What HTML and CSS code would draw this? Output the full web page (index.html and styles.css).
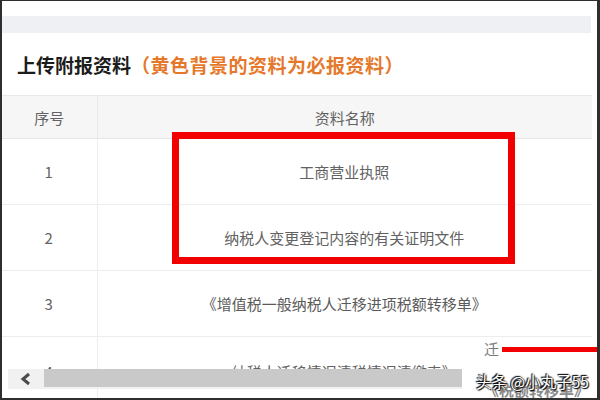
FILE: index.html
```html
<!DOCTYPE html>
<html lang="zh-CN">
<head>
    <meta charset="UTF-8">
    <meta name="viewport" content="width=device-width, initial-scale=1.0">
    <title>上传附报资料</title>
    <link rel="stylesheet" href="styles.css">
</head>
<body>

<div class="frame">
    <div class="band"></div>

    <h2 class="title">上传附报资料<span class="note">（黄色背景的资料为必报资料）</span></h2>

    <div class="table-wrap">
        <table class="docs">
            <thead>
                <tr>
                    <th class="col-no">序号</th>
                    <th>资料名称</th>
                </tr>
            </thead>
            <tbody>
                <tr><td>1</td><td>工商营业执照</td></tr>
                <tr><td>2</td><td>纳税人变更登记内容的有关证明文件</td></tr>
                <tr><td>3</td><td class="big">《增值税一般纳税人迁移进项税额转移单》</td></tr>
                <tr class="last"><td>4</td><td>纳税人迁移情况清税情况清缴表》</td></tr>
            </tbody>
        </table>
    </div>

    <!-- 横向滚动条 -->
    <div class="hscroll">
        <span class="arrow">
            <svg width="14" height="14" viewBox="0 0 14 14"><polyline points="10,2 4,7 10,12" fill="none" stroke="#4a4a4a" stroke-width="3"/></svg>
        </span>
        <span class="thumb"></span>
    </div>

    <!-- 红框标注 -->
    <div class="mark"></div>

    <!-- 右下角拼贴的截图 -->
    <div class="patch">
        <div class="patch-row">
            <span class="patch-char">迁</span>
            <span class="patch-line"></span>
        </div>
        <div class="patch-text">《税额转移单》</div>
    </div>

    <div class="watermark">头条 @小丸子55</div>
</div>

</body>
</html>
```

FILE: styles.css
```css
* {
    box-sizing: border-box;
}

body {
    margin: 0;
    font-family: "Noto Sans CJK SC", "Noto Sans", sans-serif;
    background: #fff;
}

.frame {
    position: relative;
    width: 600px;
    height: 400px;
    overflow: hidden;
    border: 2px solid #2e2e2e;
    border-top-width: 1px;
    border-right-width: 3px;
}

.band {
    height: 17px;
    margin: 15px 6px 0 0;
    background-color: #eef0f3;
}

.title {
    margin: 0;
    padding: 0 0 0 15px;
    height: 62px;
    line-height: 64px;
    font-size: 19px;
    font-weight: bold;
    color: #1c1c1c;
}

.title .note {
    color: #e5782a;
    letter-spacing: 0.5px;
}

.table-wrap {
    width: 590px;
}

.docs {
    width: 100%;
    border-collapse: collapse;
    font-size: 15px;
    color: #626262;
    text-align: center;
}

.docs th {
    height: 43px;
    font-weight: normal;
    background-color: #f6f6f6;
    border-top: 1px solid #e9e9e9;
    border-bottom: 1px solid #e6e6e6;
}

.docs .col-no {
    width: 95px;
    border-right: 1px solid #e9e9e9;
}

.docs td {
    height: 66px;
    border-bottom: 1px solid #ededed;
    padding-left: 0;
}

.docs td:first-child {
    border-right: 1px solid #ededed;
}

.docs td.big {
    color: #5a5a5a;
}

.docs tr.last td {
    padding-top: 4px;
}

.hscroll {
    position: absolute;
    left: 6px;
    top: 368px;
    width: 460px;
    height: 20px;
    display: flex;
    background-color: #f1f1f1;
}

.hscroll .arrow {
    width: 36px;
    display: flex;
    align-items: center;
    justify-content: center;
}

.hscroll .thumb {
    flex: 1;
    margin: 0 0 2px 0;
    background-color: #c9c9c9;
}

.mark {
    position: absolute;
    left: 170px;
    top: 131px;
    width: 343px;
    height: 132px;
    border: 7px solid #f20000;
}

.patch {
    position: absolute;
    left: 460px;
    top: 336px;
    width: 140px;
    height: 64px;
    background: #fff;
}

.patch-row {
    display: flex;
    align-items: center;
    height: 22px;
    padding-left: 22px;
}

.patch-char {
    font-size: 15px;
    color: #7a7a7a;
}

.patch-line {
    flex: 1;
    height: 5px;
    margin-left: 3px;
    margin-top: 2px;
    background-color: #f20000;
}

.patch-text {
    margin-top: 20px;
    padding-left: 22px;
    font-size: 15px;
    font-weight: bold;
    color: #8a8a8a;
    white-space: nowrap;
}

.watermark {
    position: absolute;
    left: 474px;
    top: 369px;
    font-size: 15.5px;
    color: #fff;
    white-space: nowrap;
    text-shadow: 0 0 2px #000, 1px 1px 1px #000, -1px -1px 1px #000;
}
```
